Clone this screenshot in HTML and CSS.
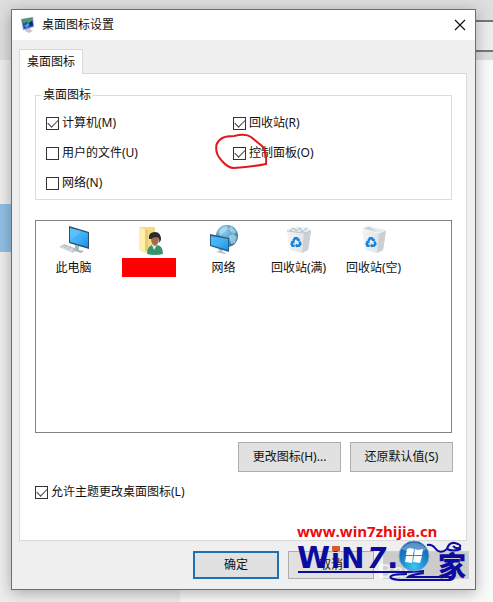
FILE: index.html
```html
<!DOCTYPE html>
<html lang="zh-CN">
<head>
<meta charset="utf-8">
<title>桌面图标设置</title>
<link rel="stylesheet" href="styles.css">
</head>
<body>
<svg width="0" height="0" class="defs" aria-hidden="true">
  <defs>
    <linearGradient id="screen" x1="0" y1="0" x2="1" y2="1"><stop offset="0" stop-color="#4fbcfb"/><stop offset=".5" stop-color="#41b1f6"/><stop offset="1" stop-color="#1e8fe6"/></linearGradient>
    <radialGradient id="globe" cx=".4" cy=".3" r=".8"><stop offset="0" stop-color="#8fcbe8"/><stop offset="1" stop-color="#1d6ea4"/></radialGradient>
    <linearGradient id="bin" x1="0" y1="0" x2="1" y2="0"><stop offset="0" stop-color="#f2f4f6"/><stop offset=".65" stop-color="#e3e6e9"/><stop offset="1" stop-color="#c9cdd1"/></linearGradient>
    <radialGradient id="orb" cx=".5" cy=".85" r=".85"><stop offset="0" stop-color="#35c8f4"/><stop offset=".55" stop-color="#1b7fcb"/><stop offset="1" stop-color="#1557a4"/></radialGradient>
    <symbol id="recycle" viewBox="0 0 12 12">
      <g fill="none" stroke="#1683d8" stroke-width="2.4"><path d="M3.2 5 5 2.2h2l1.4 2"/><path d="M9.6 5.6 10.4 8 9 9.8H6.4"/><path d="M4.6 9.8H2.6L1.6 8l1-2"/></g>
      <path fill="#1683d8" d="M9.8 2.4v3.4L6.6 4.8zM7 7.4v4.4L4.8 9.8zM.6 5.6l3.4-1 .8 3.2z"/>
    </symbol>
  </defs>
</svg>
<div class="desktop">
  <div class="backdrop" aria-hidden="true">
    <div class="backdrop-top"></div>
    <div class="backdrop-field"></div>
    <div class="backdrop-page"></div>
    <div class="backdrop-selected"></div>
  </div>
  <main class="dialog">
    <header class="titlebar">
      <svg class="title-icon" viewBox="0 0 14 16" aria-hidden="true">
        <path d="m4 12 4-2 2 3 2 1-4 2-4-2z" fill="#c9c4cf"/>
        <path d="M0 2 12 0l1 10-11 3z" fill="#8c96b5"/>
        <path d="m1 3 10-2 1 8-9 3z" fill="#1d45c0"/>
        <path d="m1 3 10-2v3L8 6 5 5 3 7z" fill="#45a452"/>
        <path d="m3 9 4-3 2 1-3 4z" fill="#37a6de"/>
        <path d="m8 6 3-2 1 4-3 1z" fill="#102076"/>
      </svg>
      <h1>桌面图标设置</h1>
      <button class="close" type="button" aria-label="关闭"><svg viewBox="0 0 12 12"><path d="m1 1 10 10M11 1 1 11"/></svg></button>
    </header>
    <form class="body">
      <div class="tabs"><button class="tab" type="button">桌面图标</button></div>
      <section class="page">
        <fieldset>
          <legend>桌面图标</legend>
          <div class="options">
            <label><input type="checkbox" checked>计算机(M)</label>
            <label><input type="checkbox" checked>回收站(R)</label>
            <label><input type="checkbox">用户的文件(U)</label>
            <label class="marked"><input type="checkbox" checked>控制面板(O)
              <svg class="circle" viewBox="0 0 54 38" aria-hidden="true"><path d="M2 13C5 5 10 3 20 3Q32 0 37 4L48 13Q53 18 52 31Q38 34 20 35Q14 35 8 28Q0 20 3 10"/></svg>
            </label>
            <label><input type="checkbox">网络(N)</label>
          </div>
        </fieldset>
        <ul class="icons">
          <li>
            <svg viewBox="0 0 32 32" aria-hidden="true"><path d="m1 23 5-3 14 5-5 4z" fill="#d5dadd"/><path d="m3 23 3-2 11 4-3 3M6 24l3-2m0 4 4-3" fill="none" stroke="#a9b3ba" stroke-width=".7"/><path d="m17 21 4 1v4l5 1-3 2-9-3 3-1z" fill="#a9b7bf"/><path d="m11 2 20 6v17l-20-6z" fill="#28506e"/><path d="m12 4 18 5v14l-18-5z" fill="url(#screen)"/><path d="m12 4 12 3-12 9z" fill="#7ad0ff" opacity=".4"/></svg>
            <span>此电脑</span>
          </li>
          <li>
            <svg viewBox="0 0 32 32" aria-hidden="true"><path d="M6 3h16v23H6z" fill="#f5d984"/><path d="m6 3 7 3v24l-7-4z" fill="#ffefaf"/><path d="M12 6h3v23l-3-2z" fill="#eccb70"/><path d="M14 30q0-9 7-9h2q7 0 7 9-8 2-16 0z" fill="#36966b"/><path d="m19 21 2 5 3-5z" fill="#e9eee9"/><path d="M18 13q0-4 4-4t4 4q0 8-4 9-4-1-4-9z" fill="#a26b4e"/><path d="M16 15q-1-7 6-7 6 0 6 8l-2 3q1-6-2-6-4 0-6 2z" fill="#292a2d"/></svg>
            <span class="redacted"></span>
          </li>
          <li>
            <svg viewBox="0 0 32 32" aria-hidden="true"><circle cx="19" cy="12" r="11" fill="url(#globe)"/><path d="M10 8q3-6 9-6l1 3-4 3-3 4zM23 2l5 5-1 3-4-2-2-3zM21 12l4-2 4 3-2 6-4 1z" fill="#c7e7f4" opacity=".6"/><path d="m10 24 4 1 1 3 4 1-3 1-8-2 3-1z" fill="#b7c4ca"/><path d="m2 10 19 4v14L2 22z" fill="#285e83"/><path d="m3 12 17 3v11L3 21z" fill="url(#screen)"/></svg>
            <span>网络</span>
          </li>
          <li>
            <svg viewBox="0 0 32 32" aria-hidden="true"><path d="m4 6 5-3 3 1 3-2 5 2 3-1 5 3v3L6 9z" fill="#e8edf0"/><path d="m7 7 4-3 2 3 4-3 2 4 5-4" fill="none" stroke="#aeb9c1"/><path d="m4 7 17 2 7-2-3 19-6 3-12-3z" fill="url(#bin)"/><path d="m21 9 7-2-3 19-6 3z" fill="#cbd0d4"/><path d="m4 7 17 2 7-2" fill="none" stroke="#bdc5ca"/><use href="#recycle" x="7" y="12" width="12" height="12"/></svg>
            <span>回收站(满)</span>
          </li>
          <li>
            <svg viewBox="0 0 32 32" aria-hidden="true"><path d="m4 5 6-3 18 4-7 3z" fill="#cbd2d7"/><path d="m10 2 18 4-7 3z" fill="#e7eaed"/><path d="m4 5 17 4 7-3-3 20-6 3-12-3z" fill="url(#bin)"/><path d="m21 9 7-3-3 20-6 3z" fill="#cbd0d4"/><path d="m4 5 6-3 18 4-7 3z" fill="none" stroke="#f6f8f9"/><use href="#recycle" x="7" y="12" width="12" height="12"/></svg>
            <span>回收站(空)</span>
          </li>
        </ul>
        <div class="page-actions"><button type="button">更改图标(H)...</button><button type="button">还原默认值(S)</button></div>
        <label class="theme"><input type="checkbox" checked>允许主题更改桌面图标(L)</label>
      </section>
      <footer class="actions">
        <button class="primary" type="button">确定</button>
        <button type="button">取消</button>
        <button type="button" disabled aria-label="应用"></button>
      </footer>
    </form>
    <div class="watermark">
      <span class="site">www.win7zhijia.cn</span>
      <svg class="logo" viewBox="0 0 180 50" role="img" aria-label="WiN7.家">
        <text x="88" y="40" class="faint">Bai</text>
        <g class="brand"><text x="7" y="30" font-size="30">W</text><text x="41" y="30" font-size="26">i</text><text x="51" y="30" font-size="28">N</text><text x="77" y="30" font-size="28" font-style="oblique">7</text><text x="97" y="30" font-size="30">.</text></g>
        <path d="M42 8h8v5h-8z" fill="#d85b35"/>
        <path d="M8 34h102q14 0 24-1M134 35q-14 2-16 4h41q8 1 1 3h-50q-12-1-9-4 3-2 16-2" fill="none" stroke="#0b0ba0" stroke-width="2"/>
        <circle cx="124" cy="18" r="15" fill="url(#orb)" stroke="#78a8cb"/>
        <path d="M111 11q13-13 26 0-10 7-26 0z" fill="#fff" opacity=".3"/>
        <g fill="#fff"><path d="m117 11 3-1 4 1-1 6-7 0zM125 11l3 1 5-1-1 6-8 0zM116 18l7 0-1 7-7-1zM124 18l8 0-2 7-7-1z"/></g>
        <text x="148" y="39" class="home">家</text>
        <path d="M137 7q5-1 8 3 5 7 12 1 2-7 8-6 8 2 4 5-3 1-6-2M157 11q6 3 14 0" fill="none" stroke="#0b0ba0" stroke-width="2"/>
      </svg>
    </div>
  </main>
</div>
</body>
</html>
```

FILE: styles.css
```css
* { box-sizing: border-box; }
body { margin: 0; font: 13px/18px "Noto Sans", "Noto Sans CJK SC", sans-serif; color: #111; }
button { font: inherit; color: inherit; }
.defs { position: absolute; }
.desktop { position: relative; min-height: 100vh; padding: 9px 17px 12px 11px; background: #eeeeee; overflow: hidden; }
.backdrop-top { position: absolute; inset: 0 0 auto; height: 60px; background: #dedede; }
.backdrop-field { position: absolute; top: 20px; right: 0; width: 60px; height: 32px; background: #ededed; border: solid #777; border-width: 2px 0; }
.backdrop-page { position: absolute; top: 60px; right: 0; bottom: 0; left: 180px; background: #fafafa; }
.backdrop-selected { position: absolute; top: 204px; left: 0; width: 20px; height: 48px; background: #91c0e5; }
.dialog { position: relative; border: 1px solid #2a80c0; background: #efefef; box-shadow: 0 3px 14px rgba(0, 0, 0, .3); }
.titlebar { display: flex; align-items: center; height: 30px; padding: 0 9px; background: #fff; }
.title-icon { width: 14px; height: 16px; }
h1 { flex: 1; margin: 0 0 0 7px; font-size: 12px; font-weight: 400; }
.close { display: grid; padding: 0; border: 0; background: none; }
.close svg { width: 12px; height: 12px; fill: none; stroke: #111; stroke-width: 1.2; }
.body { padding: 9px 8px 10px 7px; }
.tabs { display: flex; }
.tab { position: relative; z-index: 1; height: 25px; margin-bottom: -1px; padding: 0 7px; border: 1px solid #d9d9d9; border-bottom: 0; background: #fff; font-size: 12px; }
.page { padding: 12px 14px 39px 15px; border: 1px solid #d9d9d9; background: #fff; }
fieldset { height: 114px; margin: 0; padding: 10px; border: 1px solid #dcdcdc; }
legend { margin-left: -5px; padding: 0 2px; font-size: 12px; }
.options { display: grid; grid-template-columns: 187px 1fr; row-gap: 12px; }
label { display: flex; align-items: center; font-size: 12px; }
input { appearance: none; display: grid; place-items: center; width: 13px; height: 13px; margin: 0 3px 0 0; border: 1px solid #333; background: #fff; }
input:checked::after { content: ""; width: 9px; height: 5px; border: solid #444; border-width: 0 0 1px 1px; transform: translateY(-1px) rotate(-45deg); }
.marked { position: relative; }
.circle { position: absolute; top: -11px; left: -19px; width: 54px; height: 38px; fill: none; stroke: #e01920; stroke-width: 2; }
.icons { display: grid; grid-template-columns: repeat(5, 75px); align-content: start; height: 213px; margin: 20px 0 9px; padding: 3px 0; border: 1px solid #828282; list-style: none; }
.icons li { display: grid; justify-items: center; row-gap: 2px; font-size: 12px; }
.icons svg { width: 32px; height: 32px; }
.redacted { width: 54px; height: 19px; background: #f00; }
.page-actions { display: flex; justify-content: flex-end; gap: 9px; margin-right: -1px; }
.page-actions button, .actions button { border: 1px solid #adadad; background: #e1e1e1; padding: 0; font-size: 12px; }
.page-actions button { width: 103px; height: 30px; }
.theme { margin-top: 11px; }
.actions { display: flex; justify-content: flex-end; gap: 9px; margin: 10px -2px 0 0; }
.actions button { width: 86px; height: 28px; }
.actions .primary { border: 2px solid #1c70b4; }
.actions button:disabled { border-color: #cfcfcf; background: #ccc; }
.watermark { position: absolute; right: 5px; bottom: 1px; width: 180px; pointer-events: none; }
.site { display: block; margin-left: 7px; font: bold 15px/14px "Open Sans", sans-serif; color: #ee0a0a; }
.logo { display: block; width: 180px; height: 50px; }
.brand { fill: #0b0ba0; font-family: "DejaVu Sans", sans-serif; font-weight: 700; }
.faint { fill: #fff; opacity: .6; font: bold 20px "Liberation Sans", sans-serif; }
.home { fill: #0b0ba0; font: 900 28px "Noto Sans CJK SC", sans-serif; }
```
